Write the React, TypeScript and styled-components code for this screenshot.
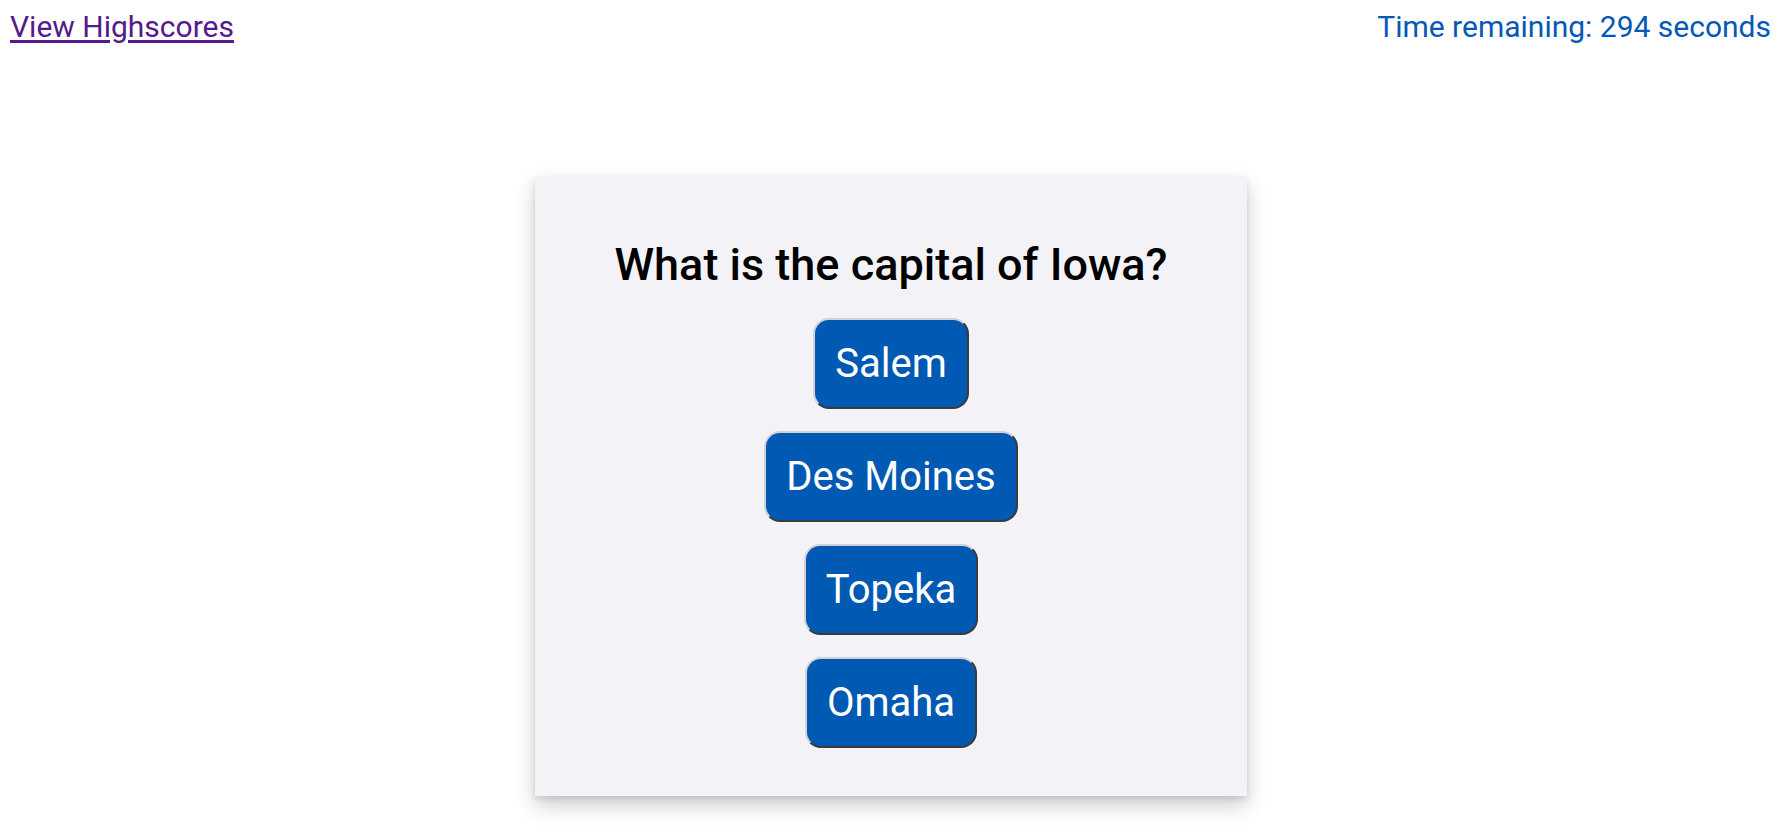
import React from "react";
import styled, { createGlobalStyle } from "styled-components";

const Global = createGlobalStyle`
  html, body { margin: 0; padding: 0; background: #ffffff; }
  body { font-family: Roboto, "Liberation Sans", Arial, sans-serif; }
`;

const Header = styled.header`
  display: flex;
  justify-content: space-between;
  align-items: flex-start;
  padding: 9px 11px 0 10px;
  font-size: 30px;
  line-height: 35px;
`;

const HighscoreLink = styled.a`
  color: #551a8b;
  text-decoration: underline;
  text-underline-offset: 3px;
  cursor: pointer;
`;

const Timer = styled.div`
  color: #0558b8;
`;

const Main = styled.main`
  display: flex;
  justify-content: center;
  padding-top: 132px;
  padding-bottom: 40px;
`;

const Card = styled.section`
  width: 40%;
  box-sizing: border-box;
  background: #f3f3f7;
  box-shadow: 0 10px 20px rgba(0, 0, 0, 0.19), 0 3px 6px rgba(0, 0, 0, 0.1);
  padding: 62px 20px 48px;
  display: flex;
  flex-direction: column;
  align-items: center;
`;

const Question = styled.h1`
  margin: 0 0 27px;
  font-size: 45px;
  line-height: 53px;
  font-weight: 500;
  color: #000;
  text-align: center;
`;

const Answers = styled.div`
  display: flex;
  flex-direction: column;
  align-items: center;
  gap: 22px;
`;

const AnswerButton = styled.button`
  font-family: Roboto, "Liberation Sans", Arial, sans-serif;
  font-size: 40px;
  line-height: 47px;
  color: #ffffff;
  background: #0059b3;
  padding: 20px;
  border-width: 2px;
  border-style: solid;
  border-color: #d2d2d6 #3a3a3c #3a3a3c #d2d2d6;
  border-radius: 16px;
  cursor: pointer;
`;

const answers = ["Salem", "Des Moines", "Topeka", "Omaha"];

export default function App() {
  return (
    <>
      <Global />
      <Header>
        <HighscoreLink>View Highscores</HighscoreLink>
        <Timer>Time remaining: 294 seconds</Timer>
      </Header>
      <Main>
        <Card>
          <Question>What is the capital of Iowa?</Question>
          <Answers>
            {answers.map((a) => (
              <AnswerButton key={a}>{a}</AnswerButton>
            ))}
          </Answers>
        </Card>
      </Main>
    </>
  );
}
